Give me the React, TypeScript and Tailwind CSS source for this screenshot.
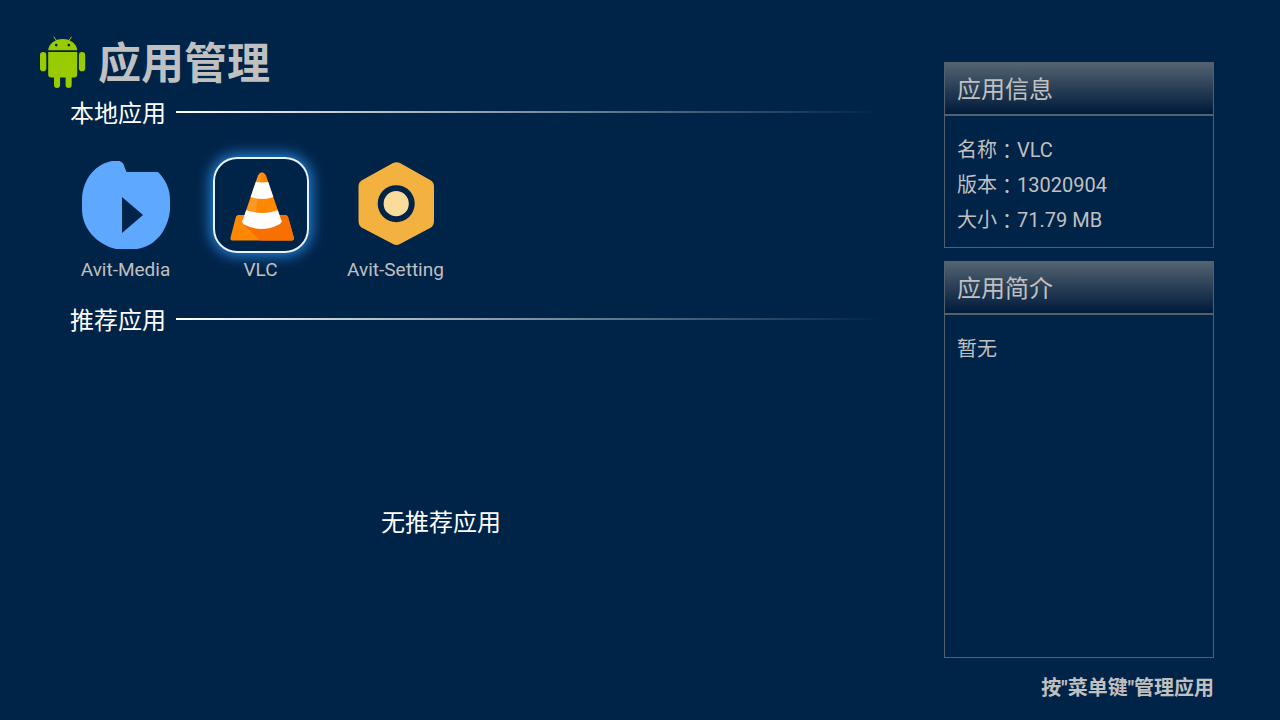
import type { ReactNode } from "react";

function AndroidIcon() {
  return (
    <svg viewBox="0 0 46 53" className="h-[53px] w-[46px] shrink-0" fill="#99cc00" aria-hidden="true">
      <path d="M14 1l3.6 5.2M31.4 1l-3.6 5.2" stroke="#99cc00" strokeWidth="1" strokeLinecap="round" />
      <path d="M8.2 14.300C8.600 7.900 14.800 3 22.700 3s14.100 4.900 14.500 11.300z" />
      <circle cx="16.200" cy="9.100" r="1.300" fill="#002348" />
      <circle cx="28.800" cy="9.100" r="1.300" fill="#002348" />
      <path d="M8.200 16h29v22.500a3 3 0 0 1-3 3h-2.500v7.500a3 3 0 0 1-6.100 0V41.500h-5.500v7.500a3 3 0 0 1-6.100 0V41.500h-2.800a3 3 0 0 1-3-3z" />
      <rect x="0" y="16" width="6.300" height="19.300" rx="3.100" />
      <rect x="38.900" y="16" width="6.300" height="19.300" rx="3.100" />
    </svg>
  );
}

function MediaIcon() {
  return (
    <svg viewBox="0 0 96 96" className="size-24" aria-hidden="true">
      <path
        fill="#5ea8ff"
        fillRule="evenodd"
        d="M34 4h7.500c3 1 4.500 3 5 6l2 5h31.500C88 23 92 32 92 43v10c-2 20-14 36-33 39H38C18 87 4 71 4 52V42C5 21 18 7 34 4zM44 40v36l21-18z"
      />
    </svg>
  );
}

function VlcIcon() {
  return (
    <svg viewBox="0 0 96 96" className="size-full" aria-hidden="true">
      <defs>
        <clipPath id="cone">
          <path d="M45 18.500Q49 12 53 18.500L68.500 64c2 7-39.500 7-39 0z" />
        </clipPath>
      </defs>
      <path fill="#ff8800" d="M25.500 58h46.500c1.800 0 2.700 1 3.200 2.500l5.500 19.500c.8 2.600-.2 3.600-2.700 3.600H20.500c-2.600 0-3.500-1.200-2.800-3.600l5-19.500c.4-1.500 1.300-2.500 2.800-2.500z" />
      <path fill="#f77000" d="M31 68l28-10h13c1.800 0 2.700 1 3.200 2.500l5.500 19.500c.8 2.600-.2 3.600-2.700 3.600H47z" />
      <g clipPath="url(#cone)">
        <path fill="#ff8800" d="M28 12h42v62H28z" />
        <path fill="#fff" d="M36 23q13 5 26 0l5 14q-18 10-36 0z" />
        <path fill="#fff" d="M24 49q25 14 50 0v24H24z" />
        <path fill="#fff" fillOpacity=".12" d="M49 12L40 74H28V12z" />
      </g>
      <path fill="#fff" d="M29.600 63q-1 3 1.400 4.500 17 9 35 0 2.800-1.500 2.400-4.500z" />
    </svg>
  );
}

function SettingIcon() {
  return (
    <svg viewBox="0 0 96 96" className="size-24" aria-hidden="true">
      <path
        fill="#f3b23f"
        d="M45 6q3.500-1.500 7 0l31 17.500q3 2 3 6v34q0 5-3 7L52 87q-3.500 2-7 0L13.500 70.500q-3-2-3-7v-34q0-4 3-6z"
      />
      <circle cx="48.200" cy="46.700" r="18.500" fill="#002348" />
      <circle cx="48.200" cy="46.700" r="12.600" fill="#f9dc9c" />
    </svg>
  );
}

function SectionHeading({ children }: { children: ReactNode }) {
  return (
    <div className="flex h-9 items-center gap-[10px] pl-[70px]">
      <h2 className="pt-[2px] text-2xl text-white">{children}</h2>
      <div className="mb-[2px] h-0.5 flex-1 bg-linear-to-r from-white to-transparent" />
    </div>
  );
}

function AppTile({ label, selected, children }: { label: string; selected?: boolean; children: ReactNode }) {
  return (
    <li className="w-[135px]">
      <button type="button" className="flex w-full flex-col items-center gap-[5px] outline-none">
        <span
          className={
            selected
              ? "block size-24 rounded-3xl shadow-[0_0_14px_3px_#2582d4,inset_0_0_0_2px_#e5f2ff]"
              : "block size-24"
          }
        >
          {children}
        </span>
        <span className="text-[19px] leading-6 text-[#c0c0c0]">{label}</span>
      </button>
    </li>
  );
}

function Panel({ title, className, children }: { title: string; className?: string; children: ReactNode }) {
  return (
    <section className={`border border-[#53616f] ${className ?? ""}`}>
      <h2 className="flex h-[53px] items-center border-b-2 border-[#53616f] bg-linear-to-b from-[#546370] to-[#001b3b] px-3 pt-[3px] text-2xl">
        {title}
      </h2>
      <div className="px-3 pt-[17px] pb-[9px] text-xl leading-[35px]">{children}</div>
    </section>
  );
}

const details = [
  { name: "名称", value: "VLC" },
  { name: "版本", value: "13020904" },
  { name: "大小", value: "71.79 MB" },
];

export default function App() {
  return (
    <div className="flex min-h-screen bg-[#002348] font-[Roboto,'Noto_Sans_CJK_SC',sans-serif] text-[#c0c0c0]">
      <main className="flex flex-1 flex-col pt-9">
        <header className="flex h-[59px] items-start gap-3 pl-10">
          <AndroidIcon />
          <h1 className="pt-px text-[43px] leading-[54px] font-bold">应用管理</h1>
        </header>
        <section>
          <SectionHeading>本地应用</SectionHeading>
          <ul className="flex pt-[26px] pb-5 pl-[58px]">
            <AppTile label="Avit-Media">
              <MediaIcon />
            </AppTile>
            <AppTile label="VLC" selected>
              <VlcIcon />
            </AppTile>
            <AppTile label="Avit-Setting">
              <SettingIcon />
            </AppTile>
          </ul>
        </section>
        <section className="flex flex-1 flex-col">
          <SectionHeading>推荐应用</SectionHeading>
          <div className="flex flex-1 items-center justify-center pb-3 text-2xl text-white">无推荐应用</div>
        </section>
      </main>
      <aside className="mr-[66px] ml-[62px] flex w-[270px] flex-col pt-[62px] pb-[17px]">
        <Panel title="应用信息">
          <dl>
            {details.map((item) => (
              <div key={item.name} className="flex h-[35px] items-center">
                <dt className="flex">
                  {item.name}
                  <span className="font-['Noto_Sans_CJK_TC',sans-serif]">：</span>
                </dt>
                <dd>{item.value}</dd>
              </div>
            ))}
          </dl>
        </Panel>
        <Panel title="应用简介" className="mt-[13px] flex-1">
          <p>暂无</p>
        </Panel>
        <p className="mt-[15px] text-right text-xl leading-[30px] font-bold">按"菜单键"管理应用</p>
      </aside>
    </div>
  );
}
